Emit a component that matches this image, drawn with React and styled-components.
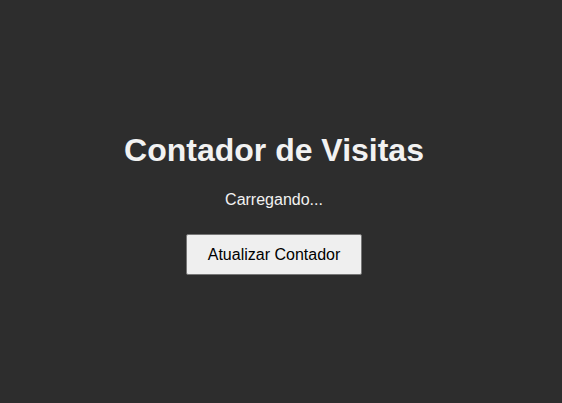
import React from "react";
import styled, { createGlobalStyle } from "styled-components";

const GlobalStyle = createGlobalStyle`
  html, body { margin: 0; padding: 0; background: #2d2d2d; }
  body { font-family: "Liberation Sans", Arial, sans-serif; }
`;

const Page = styled.main`
  min-height: 100vh;
  box-sizing: border-box;
  padding: 4px 14px 0 0;
  display: flex;
  flex-direction: column;
  align-items: center;
  justify-content: center;
  color: #f2f2f2;
`;

const Title = styled.h1`
  margin: 0 0 22px;
  font-size: 32px;
  line-height: 37px;
  font-weight: 700;
`;

const Status = styled.p`
  margin: 0 0 25px;
  font-size: 16px;
  line-height: 18px;
`;

const Button = styled.button`
  font-family: inherit;
  font-size: 16px;
  line-height: 19px;
  padding: 10px 21px;
  background: #efefef;
  color: #000;
  border: 1px solid #767676;
  border-radius: 2px;
  cursor: pointer;
`;

export default function App() {
  return (
    <>
      <GlobalStyle />
      <Page>
        <Title>Contador de Visitas</Title>
        <Status>Carregando...</Status>
        <Button>Atualizar Contador</Button>
      </Page>
    </>
  );
}
